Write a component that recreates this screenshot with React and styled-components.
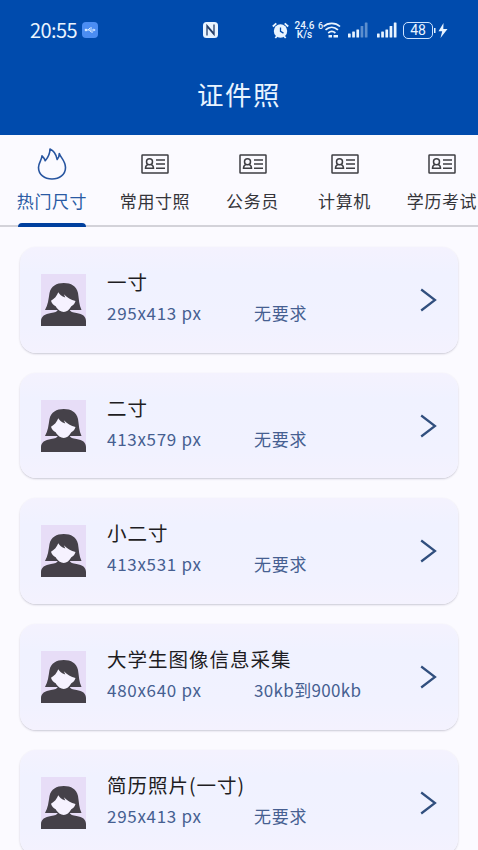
import React, { useState } from "react";
import styled, { createGlobalStyle } from "styled-components";

const GlobalStyle = createGlobalStyle`
  * {
    box-sizing: border-box;
  }
  body {
    margin: 0;
    overflow: hidden;
    background: #fbfaff;
    font-family: "Noto Sans CJK SC", sans-serif;
  }
`;

const Page = styled.div`
  height: 850px;
  overflow: hidden;
  display: flex;
  flex-direction: column;
`;

const Header = styled.header`
  flex: none;
  height: 135px;
  background: #004bad;
  color: #e9f4ff;
`;

const StatusBar = styled.div`
  display: flex;
  align-items: center;
  height: 60px;
  padding: 0 29px 0 30px;
`;

const Clock = styled.span`
  width: 47px;
  font-size: 20px;
  line-height: 24px;
  letter-spacing: -0.6px;
  white-space: nowrap;
`;

const Usb = styled.span`
  display: flex;
  width: 16px;
  height: 16px;
  margin-left: 5px;
  border-radius: 4px;
  background: #4b8df2;
`;

const Nfc = styled.svg`
  margin-left: 105px;
`;

const StatusRight = styled.div`
  display: flex;
  align-items: center;
  margin-left: auto;
`;

const Speed = styled.div`
  width: 21px;
  margin-left: 5px;
  font-family: Roboto, sans-serif;
  font-size: 10px;
  font-weight: 500;
  line-height: 9.5px;
  text-align: center;
`;

const Wifi = styled.svg`
  margin-left: 3px;
`;

const Bars = styled.svg`
  margin-left: ${(p) => p.$gap}px;
`;

const Battery = styled.div`
  display: flex;
  align-items: center;
  justify-content: center;
  width: 30px;
  height: 17px;
  margin-left: 6px;
  border: 1.5px solid #cfe4ff;
  border-radius: 5px;
  font-family: Roboto, sans-serif;
  font-size: 14px;
`;

const Title = styled.h1`
  margin: 0;
  height: 70px;
  font-size: 26.5px;
  font-weight: 400;
  line-height: 67px;
  letter-spacing: 1.5px;
  text-align: center;
`;

const Tabs = styled.nav`
  flex: none;
  display: flex;
  height: 92px;
  border-bottom: 2px solid #d3d2d9;
`;

const Tab = styled.button`
  flex: none;
  display: flex;
  flex-direction: column;
  align-items: center;
  width: ${(p) => p.$width}px;
  height: 92px;
  padding: 11px 0 0;
  border: 0;
  background: none;
  color: ${(p) => (p.$active ? "#2a5aa3" : "#35353a")};
  font-family: inherit;
`;

const TabIcon = styled.span`
  display: flex;
  align-items: center;
  justify-content: center;
  height: 35px;
`;

const TabLabel = styled.span`
  margin-top: 8px;
  font-size: 17px;
  line-height: 24px;
  letter-spacing: 0.6px;
  white-space: nowrap;
`;

const Indicator = styled.span`
  width: 68px;
  height: 4px;
  margin-top: auto;
  border-radius: 4px 4px 0 0;
  background: #003f9e;
`;

const List = styled.main`
  display: flex;
  flex-direction: column;
  gap: 20px;
  padding: 20px 20px 0;
`;

const Card = styled.section`
  flex: none;
  display: flex;
  align-items: center;
  height: 105.7px;
  padding: 0 21px;
  border-radius: 16px;
  background: linear-gradient(#f4f2fe, #f0f2ff 25%, #f1f2ff 75%, #f4f2fe);
  box-shadow: 0 1px 2px rgba(50, 45, 80, 0.24);
`;

const Info = styled.div`
  flex: 1;
  margin-left: 21px;
  padding-bottom: 6px;
`;

const Name = styled.div`
  color: #1e1d23;
  font-size: 19.5px;
  line-height: 28px;
  letter-spacing: 1px;
`;

const Meta = styled.div`
  display: flex;
  margin-top: 4px;
  color: #465f91;
  font-size: 17px;
  line-height: 26px;
  white-space: nowrap;
`;

const Pixels = styled.span`
  width: 147px;
  letter-spacing: 0.7px;
`;

const Limit = styled.span`
  letter-spacing: ${(p) => (p.$wide ? 0.35 : 0.7)}px;
`;

const tabs = [
  { label: "热门尺寸", width: 104 },
  { label: "常用寸照", width: 102 },
  { label: "公务员", width: 93 },
  { label: "计算机", width: 91 },
  { label: "学历考试", width: 104 },
];

const sizes = [
  { name: "一寸", px: "295x413 px", limit: "无要求" },
  { name: "二寸", px: "413x579 px", limit: "无要求" },
  { name: "小二寸", px: "413x531 px", limit: "无要求" },
  { name: "大学生图像信息采集", px: "480x640 px", limit: "30kb到900kb" },
  { name: "简历照片(一寸)", px: "295x413 px", limit: "无要求" },
];

const FlameIcon = () => (
  <svg width="30" height="34" viewBox="0 0 30 34" fill="none" stroke="#2855a0" strokeWidth="1.6" strokeLinejoin="round">
    <path d="M13 2C16.500 3.500 19.200 7.500 20.200 12.500C21.700 10.800 22.300 9 22.300 6.500C23.500 10.500 28.500 14 28.500 20.500C28.500 27.500 22.500 32 15 32S1.500 27.500 1.500 20.500C1.500 15.500 4.800 13.500 5 8.800C6.500 10.200 7.500 11.500 8.200 13.800C11 10.500 13 7 13 2Z" />
  </svg>
);

const CardIcon = () => (
  <svg width="28" height="20" viewBox="0 0 28 20" fill="none" stroke="#3e3e43" strokeWidth="1.5">
    <rect x="1" y="1" width="26" height="18" rx="0.5" />
    <circle cx="8.500" cy="7.800" r="3" />
    <path d="M7 10.400C5 11.300 4.500 12.300 4.500 14.300h8c0-2-.5-3-2.500-3.900M15 6H24M15 10H24M15 14.300H24" />
  </svg>
);

const Avatar = () => (
  <svg width="45" height="52" viewBox="0 0 45 52">
    <path fill="#e7ddf7" d="M0 0h45v52H0z" />
    <path fill="#454149" d="M4 36C7 31 7.500 25 8.500 19 10 12 15.500 9 22.800 9S35.500 12 37 19C38 25 38 31 40.500 36Z" />
    <path fill="#454149" d="M0 52v-5c0-4.500 4-7.200 10-8 4-.5 6-1 7-3.500h11.500c1 2.500 3 3 7 3.500 6 .8 9.500 3.500 9.500 8v5Z" />
    <path fill="#f6f2ff" d="M10 26.800C13.500 24.800 15.800 22 17.300 18.300C18.500 20.500 20.500 22.300 24.300 23.500L22.800 20.300C26 23.700 30 25.800 34.500 27C33.700 29.800 32.500 31 30.300 32.300C28.500 35.700 25.700 38 22.800 38S16.500 35.700 14.700 32.300C12.300 31.200 10.700 29.500 10 26.800Z" />
  </svg>
);

const Chevron = () => (
  <svg width="17" height="24" viewBox="0 0 17 24" fill="none" stroke="#314f7e" strokeWidth="2.2">
    <path d="M1.200 1.500 15 12 1.200 22.500" />
  </svg>
);

const UsbIcon = () => (
  <svg width="16" height="16" viewBox="0 0 16 16" fill="none" stroke="#d8eaff" strokeWidth="1">
    <path d="M3 8h9M6 8l2-2h2M7.500 8l1.500 2h2" />
    <circle cx="4" cy="8" r="0.9" fill="#d8eaff" />
    <path d="m11.500 6.600 2.200 1.400-2.200 1.400Z" fill="#d8eaff" stroke="none" />
  </svg>
);

const AlarmIcon = () => (
  <svg width="17" height="17" viewBox="0 0 17 17" fill="none" stroke="#e9f4ff" strokeWidth="1.8">
    <circle cx="8.500" cy="9" r="6.700" fill="#e9f4ff" stroke="none" />
    <path d="M0.800 4.500 4.300 1.300M16.200 4.500 12.700 1.300M3.300 16l1.800-2M13.700 16 11.900 14" />
    <path d="M8.500 5.500V9.300l3 1.800" stroke="#004bad" strokeWidth="1.300" />
  </svg>
);

const SignalBars = ({ gap, dim }) => (
  <Bars $gap={gap} width="20" height="16" viewBox="0 0 20 16" fill="#e9f4ff">
    <rect x="0" y="11.500" width="2.700" height="4" rx="0.5" />
    <rect x="4.200" y="9.500" width="2.700" height="6" rx="0.5" />
    <rect x="8.400" y="7.500" width="2.700" height="8" rx="0.5" />
    <rect x="12.600" y="4" width="2.700" height="11.500" rx="0.5" opacity={dim ? 0.4 : 1} />
    <rect x="16.800" y="0.5" width="2.700" height="15" rx="0.5" opacity={dim ? 0.4 : 1} />
  </Bars>
);

function App() {
  const [active, setActive] = useState(0);

  return (
    <Page>
      <GlobalStyle />
      <Header>
        <StatusBar>
          <Clock>20:55</Clock>
          <Usb>
            <UsbIcon />
          </Usb>
          <Nfc width="15" height="16" viewBox="0 0 15 16">
            <rect width="15" height="16" rx="3.500" fill="#e9f4ff" />
            <path d="M4 13.500V3.500l6 7M11 2.500v10L5 5.500" fill="none" stroke="#253e68" strokeWidth="1.300" />
          </Nfc>
          <StatusRight>
            <AlarmIcon />
            <Speed>
              24.6
              <br />
              K/s
            </Speed>
            <Wifi width="23" height="18" viewBox="0 0 23 18" fill="none" stroke="#e9f4ff" strokeWidth="1.700">
              <text x="0" y="8" fill="#e9f4ff" stroke="none" fontFamily="Roboto" fontSize="9" fontWeight="500">6</text>
              <path d="M5.500 5.500c4.500-4.300 12-4.300 16.500 0M7.500 8.800c3.800-3.400 8.700-3.400 12.500 0M10.200 12c2.200-2 5-2 7.200 0" />
              <path d="M10.500 15.200h3.500M15.500 15.200H20" strokeWidth="2.500" />
            </Wifi>
            <SignalBars gap={7} dim />
            <SignalBars gap={9} />
            <Battery>48</Battery>
            <svg width="16" height="17" viewBox="0 0 16 17" fill="#e9f4ff">
              <path d="M1 6h1.500v5H1zM10.500 1 5.500 9.300h3.700L7.500 16 14.500 7h-4.200Z" />
            </svg>
          </StatusRight>
        </StatusBar>
        <Title>证件照</Title>
      </Header>

      <Tabs>
        {tabs.map((tab, i) => (
          <Tab key={tab.label} $width={tab.width} $active={i === active} onClick={() => setActive(i)}>
            <TabIcon>{i === 0 ? <FlameIcon /> : <CardIcon />}</TabIcon>
            <TabLabel>{tab.label}</TabLabel>
            {i === active && <Indicator />}
          </Tab>
        ))}
      </Tabs>

      <List>
        {sizes.map((size) => (
          <Card key={size.name}>
            <Avatar />
            <Info>
              <Name>{size.name}</Name>
              <Meta>
                <Pixels>{size.px}</Pixels>
                <Limit $wide={size.limit.length > 3}>{size.limit}</Limit>
              </Meta>
            </Info>
            <Chevron />
          </Card>
        ))}
      </List>
    </Page>
  );
}

export default App;
